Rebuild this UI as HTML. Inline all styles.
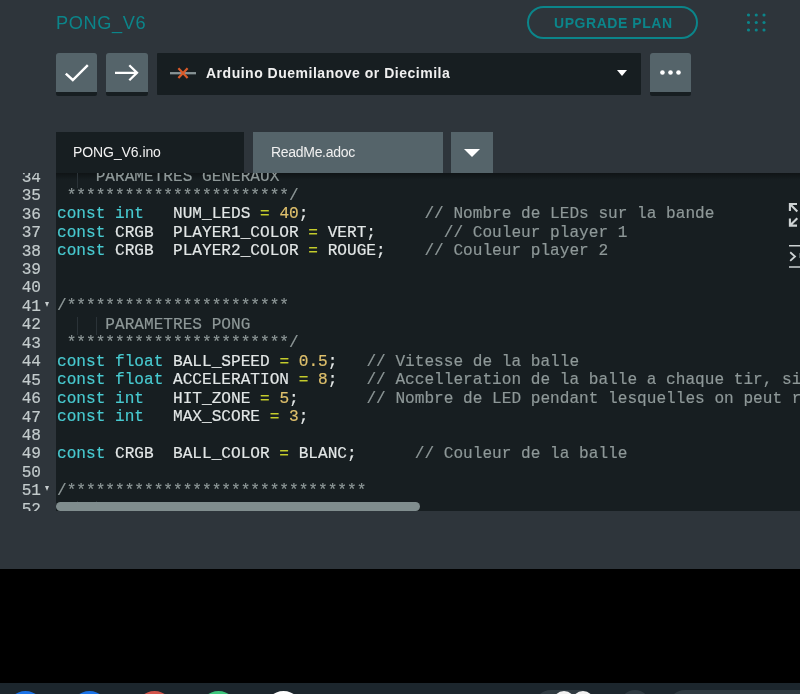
<!DOCTYPE html>
<html lang="fr">
<head>
<meta charset="utf-8">
<title>PONG_V6</title>
<style>
*{box-sizing:border-box;margin:0;padding:0}
html,body{width:800px;height:694px;overflow:hidden;background:#2e353b}
body{position:relative;font-family:"Liberation Sans",sans-serif;color:#fff}
.abs{position:absolute}
#title{left:56px;top:11px;font-size:18.2px;line-height:24px;color:#0b858a;letter-spacing:0.6px;white-space:nowrap;will-change:transform}
#upgrade{left:527.3px;top:5.8px;width:171px;height:32.8px;border:2px solid #0b858a;border-radius:17px;color:#0b858a;font-weight:bold;font-size:14px;letter-spacing:0.55px;text-align:center;line-height:30.6px;white-space:nowrap;padding-left:0.5px}
#upgrade span{will-change:transform;display:inline-block}
#grid{left:747px;top:13px;width:20px;height:20px}
.btn{background:linear-gradient(#55646a 0,#55646a 38.6px,#171e21 38.7px,#171e21 100%);border-radius:3px 3px 2px 2px;top:53.2px;height:42.5px;width:41.6px}
#b1{left:55.6px}
#b2{left:106px}
#b3{left:650px;width:41.3px}
#board{left:157px;top:53.2px;width:484px;height:41.5px;background:#171e21;border-radius:1px}
#board .name{position:absolute;left:49px;top:11px;font-size:14px;font-weight:bold;line-height:18px;letter-spacing:0.51px;color:#f0f0f0;white-space:nowrap;will-change:transform}
.tab{top:132.3px;height:40.7px;font-size:14px;line-height:41.5px;padding-left:18px;white-space:nowrap}
.tab span{display:inline-block;will-change:transform}
#t1{left:55.5px;width:188.5px;background:#171e21;color:#f2f2f2;letter-spacing:-0.08px;padding-left:17.4px}
#t2{left:253px;width:190px;background:#55646a;color:#f0f0f0;letter-spacing:-0.3px}
#t3{left:451px;width:42px;background:#55646a;padding:0}
#editor{left:0;top:173px;width:800px;height:338px;background:#171e21;overflow:hidden}
#gutter{left:0;top:0;width:55.5px;height:338px;background:#2e353b}
.ln,.cl{position:absolute;font-family:"Liberation Mono",monospace;font-size:16.12px;line-height:18.44px;height:18.44px;white-space:pre;will-change:transform;-webkit-text-stroke:0.18px}
.ln{left:0.5px;margin-top:-0.3px;width:40px;text-align:right;color:#c3cbcc}
.cl{left:57.3px;color:#e3e7e7;margin-top:-0.8px}
.ig{position:absolute;width:1px;background:#2b3338}
.fold{position:absolute;left:45.4px;width:0;height:0;border-left:2.8px solid transparent;border-right:2.8px solid transparent;border-top:5.4px solid #c6cccd}
#eshadow{left:55.5px;top:0;width:745px;height:7px;background:linear-gradient(rgba(0,0,0,0.35),rgba(0,0,0,0))}
#lines{filter:blur(0.3px)}
.k{color:#48cad0}
.c{color:#8e9898}
.o{color:#c4cc2c}
.n{color:#dfc06c}
#hscroll{left:56px;top:502.2px;width:364px;height:8.8px;border-radius:5px;background:#808d8e}
#black{left:0;top:568.8px;width:800px;height:114px;background:#000}
#shelf{left:0;top:683px;width:800px;height:11px;background:#1c262d;overflow:hidden}
.dot{position:absolute;top:8px;width:37px;height:37px;border-radius:50%}
.pill{position:absolute;top:7px;height:34px;border-radius:17px;background:#2f3a41}
</style>
</head>
<body>
<div id="title" class="abs">PONG_V6</div>
<div id="upgrade" class="abs"><span>UPGRADE PLAN</span></div>
<svg id="grid" class="abs" viewBox="0 0 20 20"><g fill="#0b858a"><circle cx="1.50" cy="2.00" r="1.55"/><circle cx="9.25" cy="2.00" r="1.55"/><circle cx="17.00" cy="2.00" r="1.55"/><circle cx="1.50" cy="9.50" r="1.55"/><circle cx="9.25" cy="9.50" r="1.55"/><circle cx="17.00" cy="9.50" r="1.55"/><circle cx="1.50" cy="17.00" r="1.55"/><circle cx="9.25" cy="17.00" r="1.55"/><circle cx="17.00" cy="17.00" r="1.55"/></g></svg>

<div id="b1" class="abs btn"><svg width="42" height="40" viewBox="0 0 42 40"><path d="M9.8 20.6 L16.8 27 L31.8 12.2" fill="none" stroke="#fff" stroke-width="2.4"/></svg></div>
<div id="b2" class="abs btn"><svg width="42" height="40" viewBox="0 0 42 40"><path d="M9 19.8 H31 M23.3 12.3 L31 19.8 L23.3 27.3" fill="none" stroke="#fff" stroke-width="2.3"/></svg></div>
<div id="board" class="abs">
<svg class="abs" style="left:13px;top:12px" width="26" height="16" viewBox="0 0 26 16"><path d="M0 8.2 H26" stroke="#879395" stroke-width="2.3"/><path d="M8.4 3.2 L17.6 13 M17.6 3.2 L8.4 13" stroke="#da5b2a" stroke-width="2.2"/></svg>
<span class="name">Arduino Duemilanove or Diecimila</span>
<svg class="abs" style="left:460.3px;top:16.9px" width="10" height="6" viewBox="0 0 10 6"><path d="M0 0 H10 L5 6 Z" fill="#fff"/></svg>
</div>
<div id="b3" class="abs btn"><svg width="41" height="40" viewBox="0 0 41 40"><g fill="#fff"><circle cx="12.45" cy="19.5" r="2.3"/><circle cx="20.5" cy="19.5" r="2.3"/><circle cx="28.5" cy="19.5" r="2.3"/></g></svg></div>

<div id="t1" class="abs tab"><span>PONG_V6.ino</span></div>
<div id="t2" class="abs tab"><span>ReadMe.adoc</span></div>
<div id="t3" class="abs tab"><svg width="42" height="40" viewBox="0 0 42 40"><path d="M13 17 H29 L21 25 Z" fill="#fff"/></svg></div>

<div id="editor" class="abs">
<div id="gutter" class="abs"></div>
<div id="eshadow" class="abs"></div>
<svg class="abs" style="left:788px;top:27px" width="12" height="72" viewBox="0 0 12 72" fill="none" stroke="#cdd2d3" stroke-width="1.7">
<path d="M1.9 11 V4 H9 M2.2 4.3 L9.3 11.4" stroke-width="2.1"/>
<path d="M1.9 18.6 V25.6 H9 M2.2 25.3 L9.3 18.2" stroke-width="2.1"/>
<path d="M1 45.8 H12 M1 67 H12" stroke-width="1.6"/>
<path d="M2.2 52.3 L7 56.5 L2.2 60.8" stroke-width="1.8"/>
<path d="M11.6 53 V58" stroke="#6d7677" stroke-width="0.8"/>
</svg>
<div id="lines">
<div class="ln" style="top:-3.90px">34</div>
<div class="ig" style="left:77.2px;top:-3.90px;height:18.44px"></div>
<div class="cl" style="top:-3.90px"><span class="c">    PARAMETRES GENERAUX</span></div>
<div class="ln" style="top:14.54px">35</div>
<div class="cl" style="top:14.54px"><span class="c"> ***********************/</span></div>
<div class="ln" style="top:32.98px">36</div>
<div class="cl" style="top:32.98px"><span class="k">const</span> <span class="k">int</span>   NUM_LEDS <span class="o">=</span> <span class="n">40</span>;            <span class="c">// Nombre de LEDs sur la bande</span></div>
<div class="ln" style="top:51.42px">37</div>
<div class="cl" style="top:51.42px"><span class="k">const</span> CRGB  PLAYER1_COLOR <span class="o">=</span> VERT;       <span class="c">// Couleur player 1</span></div>
<div class="ln" style="top:69.86px">38</div>
<div class="cl" style="top:69.86px"><span class="k">const</span> CRGB  PLAYER2_COLOR <span class="o">=</span> ROUGE;    <span class="c">// Couleur player 2</span></div>
<div class="ln" style="top:88.30px">39</div>
<div class="ln" style="top:106.74px">40</div>
<div class="ln" style="top:125.18px">41</div>
<div class="fold" style="top:128.78px"></div>
<div class="cl" style="top:125.18px"><span class="c">/***********************</span></div>
<div class="ln" style="top:143.62px">42</div>
<div class="ig" style="left:77.2px;top:143.62px;height:18.44px"></div>
<div class="ig" style="left:96.4px;top:143.62px;height:18.44px"></div>
<div class="cl" style="top:143.62px"><span class="c">     PARAMETRES PONG</span></div>
<div class="ln" style="top:162.06px">43</div>
<div class="cl" style="top:162.06px"><span class="c"> ***********************/</span></div>
<div class="ln" style="top:180.50px">44</div>
<div class="cl" style="top:180.50px"><span class="k">const</span> <span class="k">float</span> BALL_SPEED <span class="o">=</span> <span class="n">0.5</span>;   <span class="c">// Vitesse de la balle</span></div>
<div class="ln" style="top:198.94px">45</div>
<div class="cl" style="top:198.94px"><span class="k">const</span> <span class="k">float</span> ACCELERATION <span class="o">=</span> <span class="n">8</span>;   <span class="c">// Accelleration de la balle a chaque tir, si</span></div>
<div class="ln" style="top:217.38px">46</div>
<div class="cl" style="top:217.38px"><span class="k">const</span> <span class="k">int</span>   HIT_ZONE <span class="o">=</span> <span class="n">5</span>;       <span class="c">// Nombre de LED pendant lesquelles on peut renvoyer</span></div>
<div class="ln" style="top:235.82px">47</div>
<div class="cl" style="top:235.82px"><span class="k">const</span> <span class="k">int</span>   MAX_SCORE <span class="o">=</span> <span class="n">3</span>;</div>
<div class="ln" style="top:254.26px">48</div>
<div class="ln" style="top:272.70px">49</div>
<div class="cl" style="top:272.70px"><span class="k">const</span> CRGB  BALL_COLOR <span class="o">=</span> BLANC;      <span class="c">// Couleur de la balle</span></div>
<div class="ln" style="top:291.14px">50</div>
<div class="ln" style="top:309.58px">51</div>
<div class="fold" style="top:313.18px"></div>
<div class="cl" style="top:309.58px"><span class="c">/*******************************</span></div>
<div class="ln" style="top:328.02px">52</div>
<div class="ig" style="left:77.2px;top:328.02px;height:18.44px"></div>
<div class="ig" style="left:96.4px;top:328.02px;height:18.44px"></div>
<div class="cl" style="top:328.02px"><span class="c"> </span></div>
</div><!--/lines-->
</div>
<div id="hscroll" class="abs"></div>
<div id="black" class="abs"></div>
<div id="shelf" class="abs">
<div class="dot" style="left:6.6px;background:#1a73e8"></div>
<div class="dot" style="left:70.5px;background:#1a73e8"></div>
<div class="dot" style="left:135.5px;background:#d2544a"></div>
<div class="dot" style="left:199.5px;background:#3cc77c"></div>
<div class="dot" style="left:264.5px;background:#fff"></div>
<div class="pill" style="left:534px;width:62px"></div>
<div class="dot" style="left:553px;top:8px;width:22px;height:22px;background:#f2f2f2"></div>
<div class="dot" style="left:572px;top:8px;width:22px;height:22px;background:#f2f2f2"></div>
<div class="pill" style="left:620px;width:30px;height:30px"></div>
<div class="pill" style="left:668px;width:200px"></div>
</div>
</body>
</html>
